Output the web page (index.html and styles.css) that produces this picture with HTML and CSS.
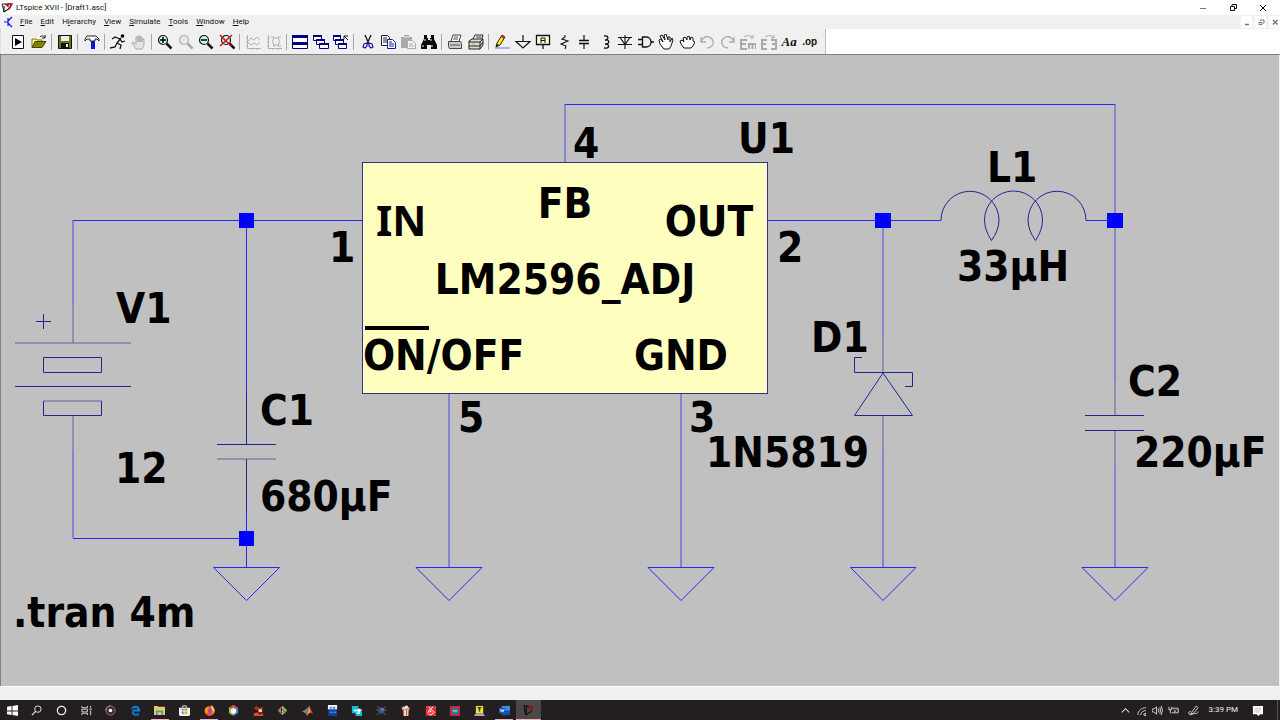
FILE: index.html
```html
<!DOCTYPE html>
<html lang="en">
<head>
<meta charset="utf-8">
<title>LTspice XVII - [Draft1.asc]</title>
<link rel="stylesheet" href="styles.css">
</head>
<body>
<header class="titlebar">
  <svg class="app-icon" viewBox="0 0 12 12"><path d="M1 2h9l-1 4-6 4z" fill="#eee" stroke="#333" stroke-width="1"/><path d="M3 10V4M3 10l6-4" stroke="#111" fill="none"/><path d="M4 2l3 2V1M8 2h3l-3 5" stroke="#b01020" stroke-width="1.5" fill="none"/></svg>
  <h1 class="title">LTspice XVII - [Draft1.asc]</h1>
  <div class="window-controls">
    <button aria-label="Minimize"><svg viewBox="0 0 10 10"><path d="M2 5.500h6" stroke="#777"/></svg></button>
    <button aria-label="Restore"><svg viewBox="0 0 10 10"><path d="M2.500 3.500h4v4h-4zM4 3V1.500h4.500v4H7" fill="none" stroke="#111"/></svg></button>
    <button aria-label="Close"><svg viewBox="0 0 10 10"><path d="M2 2l6 6M8 2L2 8" stroke="#111" fill="none"/></svg></button>
  </div>
</header>

<nav class="menubar" aria-label="Main menu">
  <svg class="doc-icon" viewBox="0 0 12 12"><path d="M1 6h4M5 2v8M5 5l4-4M5 7l4 4" stroke="#1414f0" stroke-width="1.200" fill="none"/></svg>
  <button><u>F</u>ile</button><button><u>E</u>dit</button><button>H<u>i</u>erarchy</button><button><u>V</u>iew</button><button><u>S</u>imulate</button><button><u>T</u>ools</button><button><u>W</u>indow</button><button><u>H</u>elp</button>
  <div class="child-controls">
    <button aria-label="Minimize document"><svg viewBox="0 0 10 10"><path d="M3 7.500h4" stroke="#6a7a94" stroke-width="1.500"/></svg></button>
    <button aria-label="Restore document"><svg viewBox="0 0 10 10"><path d="M3 5.500h3v2H3zM4.500 4V3h3.500v3H7" fill="none" stroke="#6a7a94"/></svg></button>
    <button aria-label="Close document"><svg viewBox="0 0 10 10"><path d="M3 3l4.500 4.500M7.500 3L3 7.500" stroke="#6a7a94" stroke-width="1.500"/></svg></button>
  </div>
</nav>

<div class="toolbar-row">
<div class="toolbar" role="toolbar" aria-label="Tools">
  <button aria-label="Run"><svg viewBox="0 0 16 16"><path d="M2.500 1.500h11v13h-11z" fill="#fff" stroke="#111"/><path d="M5 4l7 4-7 4z" fill="#000"/></svg></button>
  <button aria-label="Open"><svg viewBox="0 0 16 16"><path d="M1 13.500V5h4l1 1h5v2" fill="#ffff80" stroke="#77770a"/><path d="M1 13.500l3-6h11l-4 6z" fill="#808000" stroke="#444400"/><path d="M9 3c2-2 4-1 5 1M14 1v3h-3" fill="none" stroke="#222"/></svg></button>
  <span class="sep"></span>
  <button aria-label="Save"><svg viewBox="0 0 16 16"><path d="M1.500 1.500h13v13h-13z" fill="#707018" stroke="#111"/><path d="M4 2h8v5H4z" fill="#eee"/><path d="M4 9h8v5H4z" fill="#111"/><path d="M9 10h2v3H9z" fill="#eee"/></svg></button>
  <span class="sep"></span>
  <button aria-label="Control panel"><svg viewBox="0 0 16 16"><path d="M1 5l2-3h9l3 3v2l-2-2h-2v2H6V5H3L1 7z" fill="#fff" stroke="#222"/><path d="M7 7h4v8H7z" fill="#0018d8"/></svg></button>
  <span class="sep"></span>
  <button aria-label="Run simulation"><svg viewBox="0 0 16 16"><circle cx="12.500" cy="2" r="1.800" fill="#000"/><path d="M11 4L7 9l4 2-1 4M7 9l-2 4-5 1M10 5L5 3 2 5M10 5l2 3 3-1" fill="none" stroke="#111" stroke-width="1.300"/></svg></button>
  <button aria-label="Halt"><svg viewBox="0 0 16 16"><path d="M5 15l-4-6 1-1 3 2V3h2v5-6h2v6-5h2v5-3h2v6l-2 4z" fill="#e4e4e4" stroke="#aaa"/></svg></button>
  <span class="sep"></span>
  <button aria-label="Zoom in"><svg viewBox="0 0 16 16"><circle cx="6" cy="6" r="4.500" fill="#c8f4f4" stroke="#111" stroke-width="1.200"/><path d="M9.500 9.500l5 5" stroke="#111" stroke-width="2.500"/><path d="M3 6h6M6 3v6" stroke="#000" stroke-width="1.500"/></svg></button>
  <button aria-label="Pan"><svg viewBox="0 0 16 16"><circle cx="6" cy="6" r="4.500" fill="#e8e8e8" stroke="#aaa" stroke-width="1.200"/><path d="M9.500 9.500l5 5" stroke="#aaa" stroke-width="2.500"/></svg></button>
  <button aria-label="Zoom out"><svg viewBox="0 0 16 16"><circle cx="6" cy="6" r="4.500" fill="#c8f4f4" stroke="#111" stroke-width="1.200"/><path d="M9.500 9.500l5 5" stroke="#111" stroke-width="2.500"/><path d="M3 6h6" stroke="#000" stroke-width="1.500"/></svg></button>
  <button aria-label="Zoom full extents"><svg viewBox="0 0 16 16"><circle cx="7" cy="6" r="4.500" fill="#c8f4f4" stroke="#111" stroke-width="1.200"/><path d="M10.500 9.500l5 5" stroke="#111" stroke-width="2.500"/><path d="M1 1l11 11M13 1L1 12" stroke="#e01010" stroke-width="1.600"/></svg></button>
  <span class="sep"></span>
  <button aria-label="Autorange"><svg viewBox="0 0 16 16"><path d="M2.500 1v13.500H16M1 4h2M1 8h2M1 12h2M7 14v2M12 14v2M3 7l3-3 3 2 3-3 3 3M3 8l3 3 3-2 3 2 3-3" stroke="#b0b0b0" fill="none"/></svg></button>
  <button aria-label="Pick traces"><svg viewBox="0 0 16 16"><path d="M2.500 1v13.500H16M1 4h2M1 8h2M1 12h2M7 14v2M12 14v2M5 3h3M12 3h3M7 12h2M12 12h3M8 3q-3 4 0 9M12 3q3 4 0 9M8 4h4M8 11h4" stroke="#b0b0b0" fill="none"/></svg></button>
  <span class="sep"></span>
  <button aria-label="Tile windows"><svg viewBox="0 0 16 16"><path d="M.5 1.500h15v13H.5z" fill="#fff" stroke="#000080"/><path d="M0 1h16v3H0zM0 8h16v3H0z" fill="#000080"/></svg></button>
  <button aria-label="Cascade windows"><svg viewBox="0 0 16 16"><path d="M.5 1.500h8v5h-8zM3.500 5.500h8v5h-8zM6.500 9.500h9v5h-9z" fill="#fff" stroke="#000080"/><path d="M0 1h9v2H0zM3 5h9v2H3zM6 9h10v2H6z" fill="#000080"/></svg></button>
  <button aria-label="Close all"><svg viewBox="0 0 16 16"><path d="M.5 1.500h7v5h-7zM2.500 5.500h8v5h-8zM5.500 9.500h8v5h-8z" fill="#fff" stroke="#000080"/><path d="M0 1h8v2H0zM2 5h9v2H2zM5 9h9v2H5z" fill="#000080"/><path d="M15 6l-4-4M11 5V2h4" fill="none" stroke="#111"/></svg></button>
  <span class="sep"></span>
  <button aria-label="Cut"><svg viewBox="0 0 16 16"><path d="M5 1l4 9M11 1L7 10" stroke="#111" stroke-width="1.300"/><path d="M7 9l-3 1-1 3 2 1 2-2zM9 9l3 1 1 3-2 1-2-2z" fill="none" stroke="#1818a0" stroke-width="1.200"/></svg></button>
  <button aria-label="Copy"><svg viewBox="0 0 16 16"><path d="M1.500 1.500h6l2 2v8h-8z" fill="#fff" stroke="#222"/><path d="M3 4h4M3 6h4M3 8h4" stroke="#222"/><path d="M7.500 5.500h5l3 3v6h-8z" fill="#fff" stroke="#1818a0"/><path d="M9 8h3M9 10h5M9 12h5" stroke="#1818a0"/></svg></button>
  <button aria-label="Paste"><svg viewBox="0 0 16 16"><path d="M1 3h3V1h5v2h3v11H1z" fill="#aaa"/><path d="M4 3h5" stroke="#eee"/><path d="M7.500 6.500h5l3 3v5h-8z" fill="#f4f4f4" stroke="#aaa"/><path d="M9 10h4M9 12h5" stroke="#aaa"/></svg></button>
  <button aria-label="Find"><svg viewBox="0 0 16 16"><path d="M3 1h3v3h1v2h2V4h1V1h3v4l3 6v4h-6v-4H6v4H0v-4l3-6z" fill="#080808"/><path d="M4 5v2M10 5v2M2 11v2M11 11v2" stroke="#eee"/></svg></button>
  <span class="sep"></span>
  <button aria-label="Print"><svg viewBox="0 0 16 16"><path d="M4 7l2-6h8l-2 6" fill="#fff" stroke="#444"/><path d="M1.500 7.500h12l1 2v5h-12l-1-2z" fill="#ccc" stroke="#444"/><path d="M3 11h10M7 3h4M6 5h5" stroke="#555"/></svg></button>
  <button aria-label="Print setup"><svg viewBox="0 0 16 16"><path d="M5 5l2-4h8l-2 6" fill="#fff" stroke="#222"/><path d="M1 7l3-2h11v6l-3 4H1z" fill="#ddd" stroke="#222"/><path d="M1 8h11l3-3M1 12h11l3-4M12 8v7M8 3h5" stroke="#222" fill="none"/><path d="M4 10h4" stroke="#c8c000"/></svg></button>
  <span class="sep"></span>
  <button aria-label="Draw wire"><svg viewBox="0 0 16 16"><path d="M1 14h15" stroke="#b0b0f8" stroke-width="2"/><path d="M2 13l1-4 5-8 3 2-5 8z" fill="#ffe818" stroke="#222"/><path d="M8 1l3 2-1 2-3-2z" fill="#e01818"/><path d="M2 13l1-3 2 1z" fill="#111"/></svg></button>
  <button aria-label="Ground"><svg viewBox="0 0 16 16"><path d="M8 1v7M1 7.500h14L8 14z" fill="none" stroke="#111" stroke-width="1.200"/></svg></button>
  <button aria-label="Label net"><svg viewBox="0 0 16 16"><path d="M1.500 1.500h13v9h-13zM8 11v4" fill="#ffffe0" stroke="#111" stroke-width="1.300"/><path d="M6 9V4h4v5M6 6.500h4" fill="none" stroke="#111"/></svg></button>
  <button aria-label="Resistor"><svg viewBox="0 0 16 16"><path d="M9 1v2L6 5l6 2-7 3 5 2-1 3" fill="none" stroke="#111" stroke-width="1.100"/></svg></button>
  <button aria-label="Capacitor"><svg viewBox="0 0 16 16"><path d="M8 1v5M8 10v5" stroke="#111" stroke-width="1.200"/><path d="M3 6.500h10M3 9.500h10" stroke="#111" stroke-width="1.500"/></svg></button>
  <button aria-label="Inductor"><svg viewBox="0 0 16 16"><path d="M7 2c5-1 5 4 1 4 5-1 5 4 0 4 5 0 5 5-1 4" fill="none" stroke="#111" stroke-width="1.300"/></svg></button>
  <button aria-label="Diode"><svg viewBox="0 0 16 16"><path d="M8 1v14M1 3.500h14M3 3.500l5 7 5-7M1 10.500h14" fill="none" stroke="#111" stroke-width="1.100"/></svg></button>
  <button aria-label="Component"><svg viewBox="0 0 16 16"><path d="M4.500 3h4c6 0 6 10 0 10h-4zM0 5.500h4M0 10.500h4M13 8h3" fill="none" stroke="#111" stroke-width="1.300"/></svg></button>
  <button aria-label="Move"><svg viewBox="0 0 16 16"><path d="M6 15L2 10 1 6l2-1 2 3-3-6 2-1 3 5-1-5 2-1 2 6V3h2v5l2-4 1 2-2 6-2 3z" fill="#fff" stroke="#111"/></svg></button>
  <button aria-label="Drag"><svg viewBox="0 0 16 16"><path d="M5 14l-3-4-1-3 2-1 2 2-1-4 2-1 2 3V3l2-1 1 4 1-3 2 1v3l2 1-2 4-2 2z" fill="#fff" stroke="#111"/></svg></button>
  <button aria-label="Undo"><svg viewBox="0 0 16 16"><path d="M2 3v5h5M2 8c2-6 8-7 11-3s0 9-5 9" fill="none" stroke="#aaa" stroke-width="1.300"/></svg></button>
  <button aria-label="Redo"><svg viewBox="0 0 16 16"><path d="M14 3v5H9M14 8C12 2 6 1 3 5s0 9 5 9" fill="none" stroke="#aaa" stroke-width="1.300"/></svg></button>
  <button aria-label="Rotate"><svg viewBox="0 0 16 16"><path d="M7 6H1v9h6M1 10h5M9 15v-5h7v5M12.500 10v5" fill="none" stroke="#aaa" stroke-width="2"/><path d="M4 3c3-2 7-2 9 1M13 1v3h-3" fill="none" stroke="#aaa"/></svg></button>
  <button aria-label="Mirror"><svg viewBox="0 0 16 16"><path d="M6 6H1v9h5M1 10h4M10 6h5v9h-5M11 10h4" fill="none" stroke="#aaa" stroke-width="2"/><path d="M4 3c3-2 7-2 9 1M13 1v3h-3" fill="none" stroke="#aaa"/></svg></button>
  <button class="text-tool" aria-label="Text">Aa</button>
  <button class="op-tool" aria-label="SPICE directive">.op</button>
</div>
</div>

<main class="canvas">
<svg class="schematic" viewBox="0 54 1280 632" role="img" aria-label="LM2596 buck converter schematic">
  <rect class="chip" x="362.5" y="162.5" width="405" height="231"/>
  <path class="wire" d="M73 220.500H362M246.500 220V394M246.500 510V567.500M73 538.500H246M565 104.500H1115M768 220.500H941M1086 220.500H1115"/>
  <path class="wire soft" d="M73 220V304M73 451V538M565 104V162M1115 104V380M1115 466V567M883 220V336M883 451V567M449 394V567M681 394V567"/>
  <path class="part" d="M246.500 394V444.500M217 444.500H276M246.500 459V510M15 386.500H131M43.500 357.500H101.500V372.500H43.500zM43.500 401V415.500H101.500V401M36 321.500H51M43.500 314V329"/>
  <path class="part soft" d="M73 304V343M15 343H131M43 401H102M73 416V451M217 459H276M883 336V372M883 416V451M1115 380V415M1115 431V466"/>
  <path class="part" d="M862 357.500H854.500V372.500H912.500V386.500H905M1085 415.500H1144M1085 430.500H1144M854.500 415.500H912.500"/>
  <path class="part" d="M883 373L854.500 415.500M883 373L912.500 415.500M941 220.500A29 29 0 0 1 999 220Q999 230 991.500 240.500Q984.500 230 984.500 220A29 29 0 0 1 1042.500 220Q1042.500 230 1035.500 240.500Q1028 230 1028 220A29 29 0 0 1 1086 220.500"/>
  <path class="wire" d="M213.500 567.500H279.500M416 567.500H482M648 567.500H714M850.500 567.500H916M1082 567.500H1148"/>
  <path class="wire" d="M213.500 567.500l33 33 33-33M416 567.500l33 33 33-33M648 567.500l33 33 33-33M850.500 567.500l32.500 33 33-33M1082 567.500l33 33 33-33"/>
  <path class="node" d="M239 213h15v15h-15zM239 531h15v15h-15zM875 213h16v15h-16zM1107 213h16v15h-16z"/>
  <path class="overline" d="M365 328H429"/>
  <g class="label">
    <text x="116" y="323">V1</text><text x="115" y="483">12</text>
    <text x="260" y="425">C1</text><text x="260" y="511">680µF</text>
    <text x="13" y="627">.tran 4m</text>
    <text x="573" y="158">4</text><text x="738" y="153">U1</text>
    <text x="565" y="218" text-anchor="middle">FB</text>
    <text class="serifed" x="376" y="236">IN</text>
    <text x="709" y="236" text-anchor="middle">OUT</text>
    <text x="565" y="294" text-anchor="middle">LM2596_ADJ</text>
    <text x="363" y="370">ON/OFF</text>
    <text x="681" y="370" text-anchor="middle">GND</text>
    <text x="329" y="262">1</text><text x="777" y="262">2</text><text x="458" y="432">5</text><text x="689" y="432">3</text>
    <text x="987" y="182">L1</text><text x="957" y="281">33µH</text>
    <text x="811" y="352">D1</text><text x="706" y="467">1N5819</text>
    <text x="1128" y="396">C2</text><text x="1134" y="467">220µF</text>
  </g>
</svg>
</main>
<div class="statusbar" role="status"></div>

<footer class="taskbar">
<div class="apps">
  <button aria-label="Start"><svg viewBox="0 0 12 12"><path d="M0 2l5-1v5H0zM6 1l6-1v6H6zM0 7h5v4l-5-1zM6 7h6v5l-6-1z" fill="#fff"/></svg></button>
  <button aria-label="Search"><svg viewBox="0 0 12 12"><circle cx="7.500" cy="4.500" r="3.500" fill="none" stroke="#eee"/><path d="M5 7l-4 4" stroke="#eee" stroke-width="1.200"/></svg></button>
  <button aria-label="Cortana"><svg viewBox="0 0 12 12"><circle cx="6" cy="6" r="4.500" fill="none" stroke="#eee" stroke-width="1.500"/></svg></button>
  <button aria-label="Task view"><svg viewBox="0 0 12 12"><path d="M1 1v2h6V1M1 11V9h6v2M1 4.500h6v3H1zM10.500 1v2M10.500 6v5M9 4.500h3" fill="none" stroke="#ddd"/></svg></button>
  <button aria-label="Groove Music"><svg viewBox="0 0 12 12"><circle cx="6" cy="6" r="5" fill="#392d3a" stroke="#a46c9c"/><path d="M1 6a5 5 0 0 1 5-5" fill="none" stroke="#d89868"/><circle cx="6" cy="6" r="2" fill="#fff"/></svg></button>
  <button aria-label="Edge"><svg viewBox="0 0 12 12"><path d="M1 6C1-1 11-1 11 6v1H4c0 4 4 3 6 2v2C1 14 0 6 6 3 3 3 1 5 1 6zM4.500 5H8c0-3-3-2-3.500 0" fill="#0a84e0" fill-rule="evenodd"/></svg></button>
  <button class="open" aria-label="File Explorer"><svg viewBox="0 0 12 12"><path d="M0 1h4l1 1h7v9H0z" fill="#f4c850"/><path d="M2 6h8v5H8V8H4v3H2z" fill="#3a9be8"/></svg></button>
  <button aria-label="Microsoft Store"><svg viewBox="0 0 12 12"><path d="M4 3V1h4v2" fill="none" stroke="#eee"/><path d="M0 3h12v7q0 2-2 2H2q-2 0-2-2z" fill="#f4f4f4"/><path d="M3 4h2v2H3z" fill="#e84c2a"/><path d="M6 4h3v2H6z" fill="#70ac20"/><path d="M3 7h2v3H3z" fill="#209ce8"/><path d="M6 7h3v3H6z" fill="#e8b020"/></svg></button>
  <button class="open" aria-label="Firefox"><svg viewBox="0 0 12 12"><circle cx="6" cy="6.500" r="5.500" fill="#f05030"/><path d="M8 0c4 3 5 8 1 10 2-4-2-4-1-10" fill="#ffc830"/><path d="M1 4l3-2 2 2 2 3-3 2-4-1z" fill="#ff9020"/><circle cx="6.500" cy="6.500" r="2.300" fill="#8850c8"/></svg></button>
  <button aria-label="NetBeans"><svg viewBox="0 0 12 12"><path d="M6 0l5 3v6l-5 3z" fill="#3c80d0"/><path d="M6 0L1 3v6l5 3z" fill="#98b840"/><path d="M6 0l5 3-5 2-5-2z" fill="#d85040"/><path d="M6 3l3 2v3L6 10 3 8V5z" fill="#f8f8f8"/></svg></button>
  <button aria-label="Game"><svg viewBox="0 0 12 12"><path d="M1 1h10v10H1z" fill="#30150e"/><path d="M1 3l3-2 3 2 4-1v3L7 4 3 6z" fill="#9c351e"/><path d="M6 4l4 1v3H6z" fill="#f0d0a8"/><path d="M1 9l4-1 2 2 4-1v3H1z" fill="#e04820"/></svg></button>
  <button aria-label="Git"><svg viewBox="0 0 12 12"><path d="M6 1l5 5-5 5-5-5z" fill="#eee"/><path d="M6 1L1 6l2 2 3-3z" fill="#d96030"/><path d="M1 6l5 5V8z" fill="#4c80c8"/><path d="M11 6l-5 5V8l2-2-2-2V1z" fill="#79ac45"/><path d="M5 3v6M5 5l3 2" stroke="#222"/></svg></button>
  <button aria-label="MATLAB"><svg viewBox="0 0 12 12"><path d="M0 7l4-2 4-4-4 8z" fill="#4d9ac8"/><path d="M8 1l4 9-3-2-4 4-1-3z" fill="#d75d20"/><path d="M8 1l1 7-3 2z" fill="#f0a050"/></svg></button>
  <button aria-label="Dev-C++"><svg viewBox="0 0 12 12"><path d="M1 0h10v5H1z" fill="#f0f4ff"/><path d="M1 5h10v7H1z" fill="#143c98"/><path d="M3 3h2M6 3h3M3 8h3M7 8h3" stroke="#398bd8" stroke-width="2"/></svg></button>
  <button aria-label="Sharing"><svg viewBox="0 0 12 12"><path d="M1 1h7v8H1zM5 4h7v8H5z" fill="#18bcd0"/><path d="M3 6h7M8 4l2 2-2 2M10 9H6" stroke="#fff" stroke-width="1.500" fill="none"/></svg></button>
  <button aria-label="Proteus"><svg viewBox="0 0 12 12"><path d="M1 1l10 10M11 1L1 11M0 5l3 1M12 5L9 6" stroke="#666058"/><circle cx="6" cy="6" r="3.500" fill="#3c5484"/><circle cx="7" cy="5" r="1.500" fill="#7089b0"/></svg></button>
  <button aria-label="Popcorn Time"><svg viewBox="0 0 12 12"><path d="M3 5h7L9 12H4z" fill="#f5e8df"/><path d="M4 5v6M7 5v7M9 5v6" stroke="#c84038"/><circle cx="4" cy="3.500" r="2" fill="#e7c4a0"/><circle cx="7" cy="2.500" r="2" fill="#f8e8d0"/><circle cx="9" cy="4" r="1.500" fill="#d8a890"/></svg></button>
  <button aria-label="Raspberry Pi Imager"><svg viewBox="0 0 12 12"><path d="M1 1h11v11H1z" fill="#e83038"/><path d="M4 2l2 2 3-2M6 4l-3 4 3 3 4-3z" fill="#e83038" stroke="#fff"/><circle cx="6" cy="7" r="1" fill="#fff"/></svg></button>
  <button aria-label="Arduino"><svg viewBox="0 0 12 12"><path d="M1 1h11v11H1z" fill="#c02848"/><rect x="3" y="3" width="7" height="7" rx="3" fill="#188898"/><path d="M4 6.500h5" stroke="#d8f0f0"/></svg></button>
  <button aria-label="Tera Term"><svg viewBox="0 0 12 12"><path d="M2 1h8v8H2z" fill="#f4e020"/><path d="M4 3h4M6 3v4" stroke="#203080" stroke-width="1.500"/><path d="M0 12l2-3h8l2 3z" fill="#aaa"/></svg></button>
  <button class="open" aria-label="Word"><svg viewBox="0 0 12 12"><path d="M3 1h9v10H3z" fill="#3c90e0"/><path d="M3 6h9v5H3z" fill="#1850a8"/><path d="M0 3h7v6H0z" fill="#1858b8"/><path d="M1.500 4.500l1 3 1-2.500 1 2.500 1-3" fill="none" stroke="#fff" stroke-width=".8"/></svg></button>
  <button class="current" aria-label="LTspice XVII"><svg viewBox="0 0 12 12"><path d="M1 1h3l-1 10zM4 2h7L9 7l-6 4" fill="none" stroke="#111" stroke-width="1.300"/><path d="M5 3l2 2V2M8 2h4L9 6" fill="none" stroke="#a01824" stroke-width="1.300"/></svg></button>
</div>
<div class="tray">
  <button aria-label="Show hidden icons"><svg viewBox="0 0 12 12"><path d="M2 8l4-4 4 4" fill="none" stroke="#ddd" stroke-width="1.200"/></svg></button>
  <button aria-label="Network"><svg viewBox="0 0 12 12"><path d="M2 11c0-5 4-8 9-8M5 11c0-3 3-5 6-5M8 11c0-1 1-2 3-2" fill="none" stroke="#ccc"/><circle cx="10" cy="11" r="1" fill="#fff"/></svg></button>
  <button aria-label="Volume"><svg viewBox="0 0 12 12"><path d="M0 4.500h2l3-2.500v8L2 7.500H0zM7 4q1 2 0 4M8.500 2.500q2 3.500 0 7M10 1q3 5 0 10" fill="none" stroke="#ddd"/></svg></button>
  <button aria-label="Battery"><svg viewBox="0 0 12 12"><path d="M4 3.500h7v5H4M12 5v2M1 2v3h3V2M2.500 5v4" fill="none" stroke="#ddd"/><path d="M6 5l3 3M9 5L6 8" stroke="#aaa"/></svg></button>
  <button class="pen" aria-label="Windows Ink"><svg viewBox="0 0 12 12"><path d="M4 8l5-7 2 2-5 6-3 1zM3 7c-5 1-1 5 2 3s5 1 6-3" fill="none" stroke="#ddd"/></svg></button>
  <time class="clock">3:39 PM</time>
  <button class="notice" aria-label="Notifications"><svg viewBox="0 0 12 12"><path d="M1 1h11v9H9l-2 2-2-2H1z" fill="#fff"/><path d="M3 3.500h7M3 5.500h7M3 7.500h5" stroke="#bbb"/></svg></button>
</div>
</footer>
</body>
</html>
```
FILE: styles.css
```css
* { box-sizing: border-box; }
html, body { height: 100%; }
body {
  margin: 0;
  display: flex;
  flex-direction: column;
  overflow: hidden;
  background: #f0f0f0;
  color: #111;
  font-family: Roboto, "Open Sans", sans-serif;
  font-size: 8px;
  line-height: 12px;
}
button {
  display: flex;
  align-items: center;
  justify-content: center;
  margin: 0;
  padding: 0;
  border: 0;
  background: none;
  color: inherit;
  font: inherit;
}
svg { display: block; flex: none; }

.titlebar { display: flex; align-items: center; height: 15px; background: #fff; }
.app-icon { width: 12px; height: 12px; margin: 0 3px 0 1px; }
.title { margin: 0; font-size: 8px; font-weight: 400; }
.window-controls { display: flex; gap: 20px; margin-left: auto; padding-right: 12px; }
.window-controls svg { width: 10px; height: 10px; }

.menubar { display: flex; align-items: center; height: 14px; background: #f0f0f0; }
.doc-icon { width: 12px; height: 12px; margin: 0 1px 0 3px; }
.menubar > button { display: block; padding: 0 4px; }
.child-controls { display: flex; gap: 3px; margin-left: auto; }
.child-controls button { width: 11px; height: 12px; background: #fff; }
.child-controls svg { width: 10px; height: 10px; }

.toolbar-row { height: 25px; background: #fff; }
.toolbar {
  display: flex;
  align-items: center;
  width: 826px;
  height: 25px;
  padding: 0 5px 0 7px;
  background: #f0f0f0;
  border-left: 1px dotted #ccc;
  border-right: 1px solid #bbb;
}
.toolbar button { flex: 1; height: 20px; }
.toolbar svg { width: 16px; height: 16px; }
.sep { width: 6px; height: 16px; background: linear-gradient(90deg, transparent 2px, #a8a8a8 2px, #a8a8a8 3px, transparent 3px); }
.toolbar .text-tool { font: italic bold 13px "Liberation Serif", serif; }
.toolbar .op-tool { font: bold 10px "Liberation Sans", sans-serif; }

.canvas {
  flex: 1;
  min-height: 0;
  background: #c0c0c0;
  box-shadow: inset 1px 1px #808080, inset -1px 0 #f0f0f0;
}
.schematic { width: 100%; height: 100%; }
.chip { fill: #ffffc0; stroke: #303090; }
.wire, .part { fill: none; stroke-width: 1; }
.wire { stroke: #2828f4; }
.part { stroke: #242490; }
.wire.soft { stroke: #4848e4; }
.part.soft { stroke: #6060a4; }
.node { fill: #00f; }
.overline { stroke: #000; stroke-width: 4; }
.label { font: bold 42px "DejaVu Sans Condensed", "DejaVu Sans", sans-serif; fill: #000; }
.serifed { font-family: "Noto Sans", sans-serif; }

.statusbar { height: 14px; background: #f0f0f0; border-top: 1px solid #fafafa; }

.taskbar { display: flex; justify-content: space-between; height: 20px; background: #231f20; color: #eee; }
.apps { display: flex; width: 541px; }
.apps button { flex: 1; }
.apps svg { width: 11px; height: 11px; }
.apps .open { background: linear-gradient(#f0b0c0, #f0b0c0) bottom / calc(100% - 6px) 1px no-repeat; }
.apps .current { background: linear-gradient(#f0b0c0, #f0b0c0) bottom / 100% 1px no-repeat, #4c4848; }
.tray { display: flex; align-items: center; gap: 5px; padding-right: 2px; border-right: 1px solid #555; margin-right: 2px; }
.tray svg { width: 11px; height: 11px; }
.pen { margin-left: 4px; }
.clock { margin-left: 5px; font-size: 8px; }
.notice { margin: 0 12px 0 9px; }
```
